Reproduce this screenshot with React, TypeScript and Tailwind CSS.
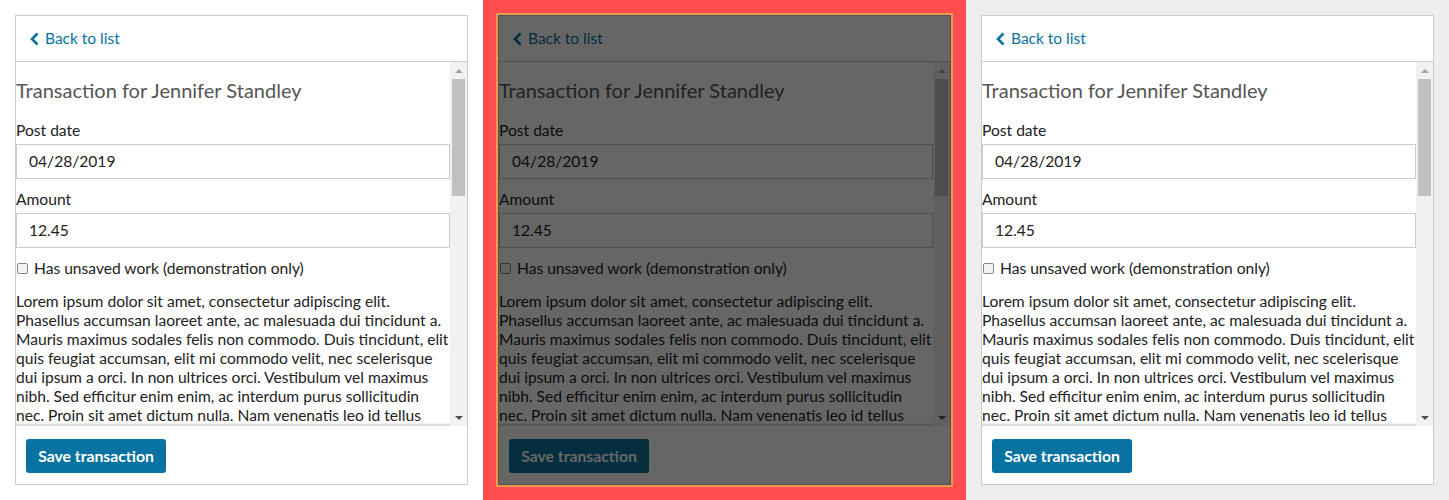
import React from 'react'

const loremLines = [
  'Lorem ipsum dolor sit amet, consectetur adipiscing elit.',
  'Phasellus accumsan laoreet ante, ac malesuada dui tincidunt a.',
  'Mauris maximus sodales felis non commodo. Duis tincidunt, elit',
  'quis feugiat accumsan, elit mi commodo velit, nec scelerisque',
  'dui ipsum a orci. In non ultrices orci. Vestibulum vel maximus',
  'nibh. Sed efficitur enim enim, ac interdum purus sollicitudin',
  'nec. Proin sit amet dictum nulla. Nam venenatis leo id tellus',
]

const ChevronLeft = () => (
  <svg width="9" height="14" viewBox="0 0 9 14" className="shrink-0">
    <path d="M7.5 1.5 L2 7 L7.5 12.5" fill="none" stroke="currentColor" strokeWidth="2.6" strokeLinejoin="miter" />
  </svg>
)

const FakeScrollbar = () => (
  <div className="w-[17px] shrink-0 bg-[#f1f1f1] flex flex-col items-center">
    <div className="h-[17px] flex items-center justify-center">
      <div className="w-0 h-0 border-l-[4px] border-r-[4px] border-b-[4px] border-l-transparent border-r-transparent border-b-[#a3a3a3]" />
    </div>
    <div className="w-[13px] h-[117px] bg-[#c1c1c1]" />
    <div className="flex-1" />
    <div className="h-[17px] flex items-center justify-center">
      <div className="w-0 h-0 border-l-[4px] border-r-[4px] border-t-[4px] border-l-transparent border-r-transparent border-t-[#505050]" />
    </div>
  </div>
)

const Panel = ({ dimmed }: { dimmed?: boolean }) => (
  <div
    className={
      dimmed
        ? 'relative h-[470px] flex flex-col border border-[#cccccc] bg-white outline-2 outline-[#e89c4c]'
        : 'relative h-[470px] flex flex-col border border-[#cccccc] bg-white'
    }
  >
    <div className="h-[46px] shrink-0 border-b border-[#cccccc] flex items-center gap-[6px] pl-[14px] pt-[1px] text-[#0873a0] text-[15.5px]">
      <ChevronLeft />
      <span>Back to list</span>
    </div>
    <div className="flex-1 flex min-h-0 shadow-[inset_0_-3px_2px_-1px_#d4d4d4]">
      <div className="flex-1 min-w-0 overflow-hidden text-[#222222] pt-[16px] text-[15.6px]">
        <h2 className="text-[20px] leading-[24px] text-[#555555] mb-[18px]">Transaction for Jennifer Standley</h2>
        <label className="block leading-[20px] mb-[4px]">Post date</label>
        <div className="h-[35px] border border-[#cccccc] flex items-center pl-[12px]">04/28/2019</div>
        <label className="block leading-[20px] mt-[10px] mb-[4px]">Amount</label>
        <div className="h-[35px] border border-[#cccccc] flex items-center pl-[12px]">12.45</div>
        <div className="flex items-center gap-[6px] mt-[10px] leading-[20px]">
          <span className="ml-[1px] w-[11px] h-[11px] rounded-[2px] border border-[#888888] bg-[#f4f4f4]" />
          <span>Has unsaved work (demonstration only)</span>
        </div>
        <p className="mt-[14px] leading-[19px]">
          {loremLines.map((line) => (
            <span key={line} className="block whitespace-nowrap">{line}</span>
          ))}
        </p>
      </div>
      <FakeScrollbar />
    </div>
    <div className="h-[58px] shrink-0 pt-[13px] pl-[10px]">
      <button className="h-[34px] w-[140px] rounded-[3px] bg-[#0873a0] text-white text-[15.75px] font-bold">Save transaction</button>
    </div>
    {dimmed && <div className="absolute -inset-[1px] bg-black/60" />}
  </div>
)

export default function App() {
  return (
    <div className="w-[1449px] h-[500px] flex" style={{ fontFamily: 'Lato, "Noto Sans", sans-serif' }}>
      <div className="w-[483px] bg-white p-[15px]">
        <Panel />
      </div>
      <div className="w-[483px] bg-[#ff4d4d] p-[15px]">
        <Panel dimmed />
      </div>
      <div className="w-[483px] bg-[#eeeeee] p-[15px]">
        <Panel />
      </div>
    </div>
  )
}
